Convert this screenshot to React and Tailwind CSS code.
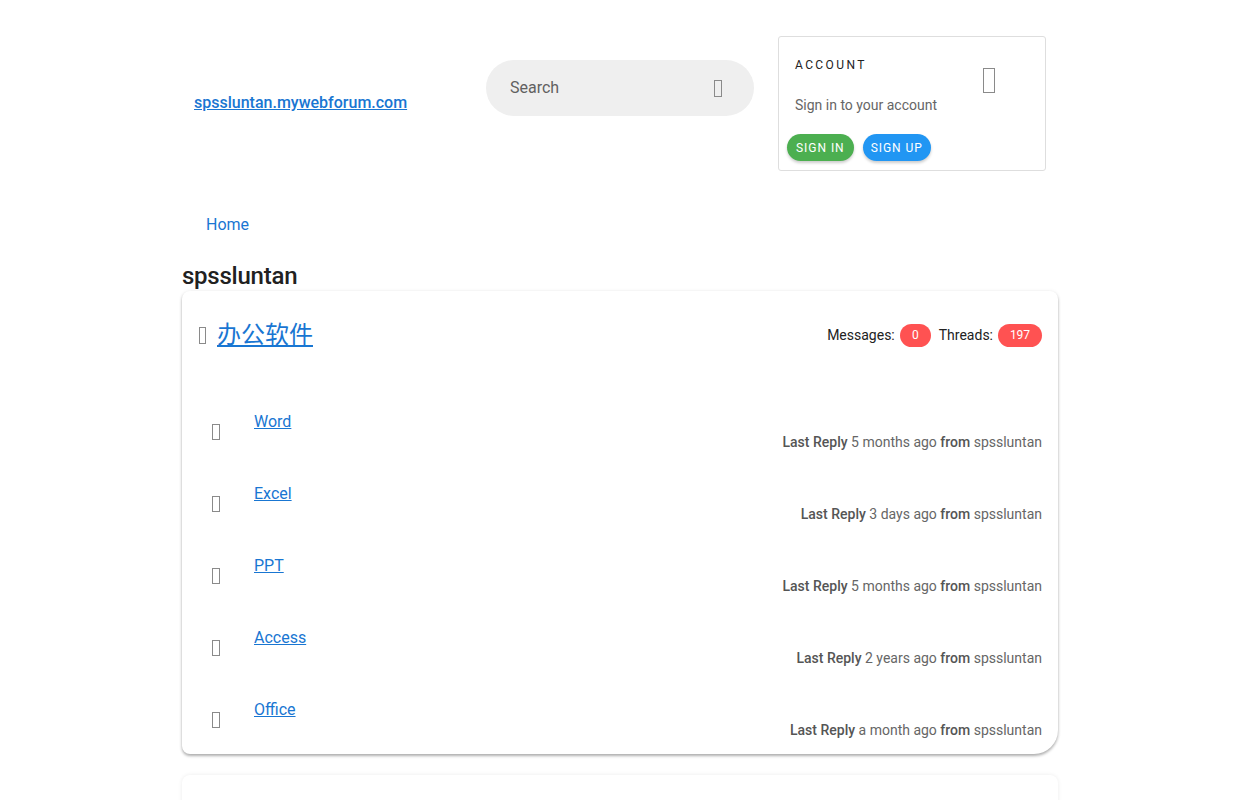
import React from 'react'

const font = { fontFamily: 'Roboto, "Noto Sans CJK SC", sans-serif' }

const forums = [
  { name: 'Word', when: '5 months ago' },
  { name: 'Excel', when: '3 days ago' },
  { name: 'PPT', when: '5 months ago' },
  { name: 'Access', when: '2 years ago' },
  { name: 'Office', when: 'a month ago' },
]

// missing-glyph box, as the icon font failed to load in the original
function Tofu({ className }) {
  return <span className={'inline-block border border-[#8a8a8a] shrink-0 ' + className} />
}

function Header() {
  return (
    <div className="flex items-start pt-[36px]">
      <div className="w-[292px] px-[12px] pt-[55px]">
        <a href="#" className="text-[16px] leading-[18px] font-medium text-[#1976d2] underline">spssluntan.mywebforum.com</a>
      </div>
      <div className="w-[292px] px-[12px] pt-[24px]">
        <div className="h-[56px] rounded-full bg-[#efefef] flex items-center pl-[24px] pr-[32px]">
          <span className="flex-1 text-[16px] text-[#616161]">Search</span>
          <Tofu className="w-[8px] h-[17px]" />
        </div>
      </div>
      <div className="w-[292px] px-[12px]">
        <div className="h-[135px] border border-[#dedede] rounded-[3px] flex flex-col">
          <div className="flex pl-[16px] pt-[20px]">
            <div className="flex-1">
              <div className="text-[12px] leading-[16px] tracking-[0.2em] text-[#222]">ACCOUNT</div>
              <div className="text-[14px] leading-[20px] text-[#666] mt-[22px]">Sign in to your account</div>
            </div>
            <div className="w-[62px] pt-[11px]">
              <Tofu className="w-[12px] h-[25px]" />
            </div>
          </div>
          <div className="flex gap-[9px] pl-[8px] mt-[19px]">
            <button className="h-[27px] px-[9px] rounded-full bg-[#4caf50] text-white text-[12px] tracking-[0.08em] shadow-[0_2px_3px_rgba(0,0,0,0.2)]">SIGN IN</button>
            <button className="h-[27px] px-[8px] rounded-full bg-[#2196f3] text-white text-[12px] tracking-[0.08em] shadow-[0_2px_3px_rgba(0,0,0,0.2)]">SIGN UP</button>
          </div>
        </div>
      </div>
    </div>
  )
}

function ForumRow({ f }) {
  return (
    <div className="flex items-center pl-[30px] pr-[16px] pt-[18px] pb-[14px]">
      <Tofu className="w-[8px] h-[16px]" />
      <div className="flex-1 pl-[34px]">
        <div className="leading-[20px]">
          <a href="#" className="text-[16px] text-[#1976d2] underline">{f.name}</a>
        </div>
        <div className="text-right text-[14px] leading-[20px] text-[#666]">
          <span className="font-medium text-[#555]">Last Reply</span> {f.when} <span className="font-medium text-[#555]">from</span> spssluntan
        </div>
      </div>
    </div>
  )
}

export default function App() {
  return (
    <div className="min-h-screen bg-white overflow-hidden" style={font}>
      <div className="w-[876px] mx-auto">
        <Header />
        <div className="pl-[24px] pt-[42px] text-[16px] leading-[24px] text-[#1976d2]">Home</div>
        <h1 className="text-[24px] leading-[30px] font-medium text-[#212121] mt-[24px] tracking-[-0.01em]">spssluntan</h1>
        <div className="rounded-[8px] rounded-br-[24px] bg-white shadow-[0_2px_3px_rgba(0,0,0,0.3),0_0_4px_rgba(0,0,0,0.06)]">
          <div className="flex items-center pl-[17px] pr-[16px] pt-[28px] pb-[43px]">
            <Tofu className="w-[7px] h-[17px]" />
            <a href="#" className="ml-[11px] text-[24px] leading-[32px] text-[#1976d2] underline">办公软件</a>
            <div className="flex-1" />
            <span className="text-[14px] text-[#222]">Messages:</span>
            <span className="ml-[5px] h-[23px] w-[31px] rounded-full bg-[#ff5252] text-white text-[12px] flex items-center justify-center">0</span>
            <span className="ml-[8px] text-[14px] text-[#222]">Threads:</span>
            <span className="ml-[5px] h-[23px] w-[44px] rounded-full bg-[#ff5252] text-white text-[12px] flex items-center justify-center">197</span>
          </div>
          {forums.map(f => <ForumRow key={f.name} f={f} />)}
        </div>
        <div className="mt-[21px] h-[120px] rounded-[8px] bg-white shadow-[0_0_4px_rgba(0,0,0,0.08)]" />
      </div>
    </div>
  )
}
